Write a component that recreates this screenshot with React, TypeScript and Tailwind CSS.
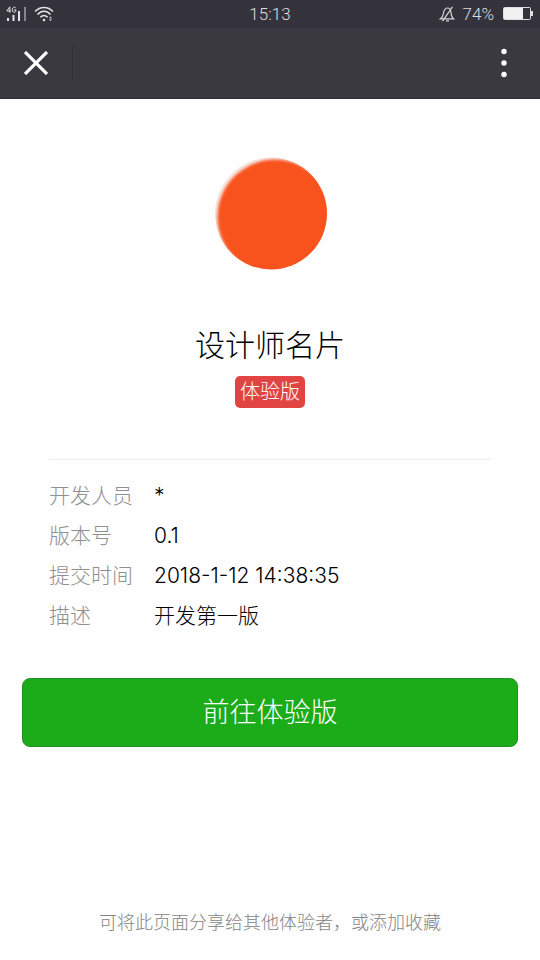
import type { ReactNode } from "react";

interface DetailRow {
    label: string;
    value: string;
}

const details: DetailRow[] = [
    { label: "开发人员", value: "*" },
    { label: "版本号", value: "0.1" },
    { label: "提交时间", value: "2018-1-12 14:38:35" },
    { label: "描述", value: "开发第一版" },
];

function SignalIcon() {
    return (
        <svg className="w-5 h-4" viewBox="0 0 20 16" aria-label="4G">
            <g fill="none" stroke="#dddde1" strokeWidth="1">
                <path d="M3.8 6.800V.8L.8 4.900h4.200" />
                <path d="M9.800 2.200C9.200 0.600 6.200 0.600 6.200 3.600s3 3.400 3.600 1.700V3.900H8" />
            </g>
            <g fill="#e6e6e9">
                <rect x="1" y="12" width="2" height="3" />
                <rect x="6.500" y="9" width="2" height="6" />
                <rect x="12" y="5" width="2" height="10" />
            </g>
            <rect x="18" y="1" width="2" height="14" fill="#85858b" />
        </svg>
    );
}

function WifiIcon() {
    return (
        <svg className="w-5 h-4" viewBox="0 0 20 16" aria-label="Wi-Fi">
            <g fill="none" stroke="#e3e3e6" strokeWidth="1.500">
                <path d="M1 5.500C6 0 14 0 19 5.500" />
                <path d="M3.500 8.500c4-4.300 9-4.300 13 0" />
                <path d="M6.300 11.300c2.300-2.500 5-2.500 7.400 0" />
            </g>
            <circle cx="10" cy="14" r="1.300" fill="#e3e3e6" />
            <path d="M15 12.300l1.500-2 1.500 2zM15 13.300l1.500 2 1.500-2z" fill="#c5c5ca" />
        </svg>
    );
}

function MutedBellIcon() {
    return (
        <svg className="w-4 h-4" viewBox="0 0 16 16" fill="none" stroke="#d5d5d9" strokeWidth="1.200" aria-label="Muted">
            <path d="M1.500 12.800h13c-1.800-1.300-2.200-2.800-2.400-5.800C11.900 4 10.600 2 8.500 2S5 4 4.500 7c-.4 3-1.200 4.500-3 5.800z" />
            <path d="M7 14.800h3M13.500.8L3.500 15.200" />
        </svg>
    );
}

function BatteryIcon() {
    return (
        <svg className="w-8 h-4" viewBox="0 0 32 16" aria-label="Battery">
            <rect x="1.500" y="1.500" width="27" height="12" rx="1" fill="none" stroke="#dedee1" />
            <rect x="2" y="2" width="19" height="11" fill="#f1f1f2" />
            <rect x="29" y="5" width="2" height="5" fill="#dedee1" />
        </svg>
    );
}

function IconButton({ label, children }: { label: string; children: ReactNode }) {
    return (
        <button type="button" aria-label={label} className="flex h-full w-[72px] items-center justify-center">
            {children}
        </button>
    );
}

export default function App() {
    return (
        <div className="flex min-h-screen flex-col bg-[#fefefe] font-['Inter','Noto_Sans_CJK_SC',sans-serif] font-light text-black">
            <header className="bg-[#3a393f] text-white">
                {/* Status bar */}
                <div className="grid h-7 grid-cols-3 items-center bg-[#34333b] px-1.5 font-['Roboto',sans-serif] text-[17px] leading-7 text-[#dcdce0]">
                    <div className="flex items-center gap-2">
                        <SignalIcon />
                        <WifiIcon />
                    </div>
                    <span className="text-center">15:13</span>
                    <div className="flex items-center justify-end gap-2">
                        <MutedBellIcon />
                        <span>74%</span>
                        <BatteryIcon />
                    </div>
                </div>

                {/* Navigation bar */}
                <div className="flex h-[71px] items-center justify-between border-b border-[#302f35]">
                    <div className="flex h-full items-center">
                        <IconButton label="关闭">
                            <svg className="w-6 h-6" viewBox="0 0 24 24" fill="none" stroke="white" strokeWidth="3.200">
                                <path d="M1 1l22 22M23 1L1 23" />
                            </svg>
                        </IconButton>
                        <span className="h-9 w-px bg-[#323039]" />
                    </div>
                    <IconButton label="更多">
                        <svg className="w-2 h-8" viewBox="0 0 8 32" fill="white">
                            <circle cx="4" cy="4.500" r="2.700" />
                            <circle cx="4" cy="16" r="2.700" />
                            <circle cx="4" cy="27.500" r="2.700" />
                        </svg>
                    </IconButton>
                </div>
            </header>

            <main className="flex flex-1 flex-col px-[22px]">
                <section className="flex flex-col items-center pt-[58px]">
                    <svg className="h-[113px] w-[113px]" viewBox="0 0 113 113" aria-hidden="true">
                        <defs>
                            <clipPath id="avatar">
                                <circle cx="57" cy="56.500" r="56" />
                            </clipPath>
                            <filter id="soft" x="-10%" y="-10%" width="120%" height="120%">
                                <feGaussianBlur stdDeviation="1.400" />
                            </filter>
                        </defs>
                        <g clipPath="url(#avatar)">
                            <rect width="113" height="113" fill="#f6eae7" />
                            <circle cx="61" cy="60" r="57.500" fill="#f8521e" filter="url(#soft)" />
                        </g>
                    </svg>
                    <h1 className="mt-[53px] text-[30px] leading-[44px] font-light">设计师名片</h1>
                    <span className="mt-[9px] rounded-[5px] bg-[#e14443] px-[5px] text-xl leading-8 text-white">体验版</span>
                </section>

                <dl className="mx-[27px] mt-[51px] border-t border-[#ebebeb] pt-4 text-[21px] leading-10">
                    {details.map((row) => (
                        <div key={row.label} className="flex">
                            <dt className="w-[105px] shrink-0 text-[#8f8f8f]">{row.label}</dt>
                            <dd>{row.value}</dd>
                        </div>
                    ))}
                </dl>

                <button
                    type="button"
                    className="mt-[42px] h-[69px] w-full rounded-lg border border-[#258e27] bg-[#1cac19] text-[27px] leading-10 text-white"
                >
                    前往体验版
                </button>
            </main>

            <footer className="pb-[23px] text-center text-lg leading-7 text-[#858585]">
                可将此页面分享给其他体验者，或添加收藏
            </footer>
        </div>
    );
}
